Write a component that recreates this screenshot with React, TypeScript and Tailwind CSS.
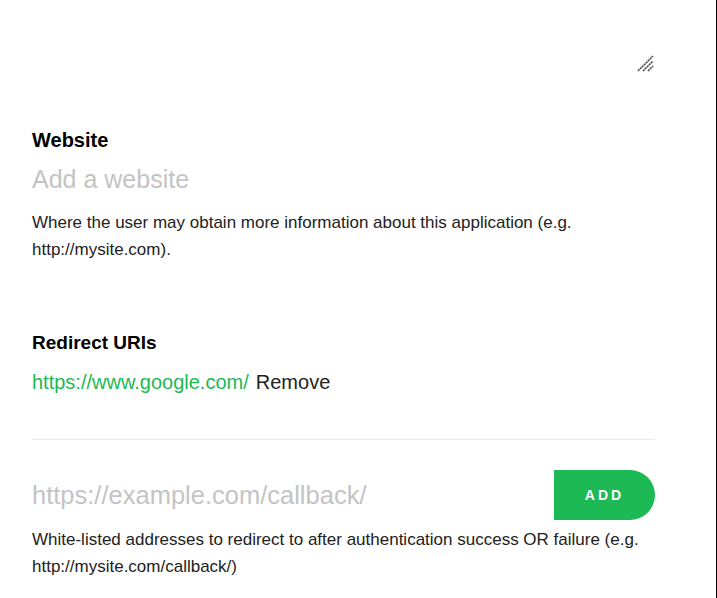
import * as React from 'react';

const font = { fontFamily: '"Liberation Sans", Arial, sans-serif' };

// textarea resize grip, drawn so it matches the larger one in the picture
const Grip = () => (
	<svg width="19" height="19" viewBox="0 0 19 19" className="absolute right-0 bottom-0 pointer-events-none">
		<g stroke="#555" strokeWidth="1.7" strokeDasharray="2.2 0.6">
			<line x1="2" y1="17" x2="17" y2="2" />
			<line x1="7" y1="17" x2="17" y2="7" />
			<line x1="12" y1="17" x2="17" y2="12" />
		</g>
	</svg>
);

export default function App() {
	const [uris, setUris] = React.useState<string[]>(['https://www.google.com/']);
	const [draft, setDraft] = React.useState('');

	return (
		<div className="w-[717px] h-[598px] overflow-hidden bg-white border-r border-black" style={font}>
			<div className="w-[623px] ml-8">
				<div className="relative w-full h-[73px]">
					<textarea className="block w-full h-full resize-none outline-none border-none bg-white text-[16px]" />
					<Grip />
				</div>

				<section className="mt-[55px]">
					<h3 className="text-[20px] font-bold leading-[24px] text-black">Website</h3>
					<input
						placeholder="Add a website"
						className="block w-full h-[38px] mt-[8px] text-[25px] outline-none placeholder:text-[#c4c4c4]"
					/>
					<p className="mt-[11px] text-[17px] leading-[27px] text-[#222]">
						Where the user may obtain more information about this application (e.g.
						<br />
						http://mysite.com).
					</p>
				</section>

				<section className="mt-[68px]">
					<h3 className="text-[19px] font-bold leading-[24px] text-black">Redirect URIs</h3>
					<ul className="mt-[15px]">
						{uris.map((u, i) => (
							<li key={i} className="flex items-center gap-[7px] text-[20px] leading-[24px]">
								<span className="text-[#1db954]">{u}</span>
								<button
									className="text-[#222] cursor-pointer"
									onClick={() => setUris(uris.filter((_, j) => j !== i))}>
									Remove
								</button>
							</li>
						))}
					</ul>
					<div className="mt-[45px] h-px bg-[#ebebeb]" />
					<div className="flex items-center mt-[30px]">
						<input
							value={draft}
							onChange={(e) => setDraft(e.target.value)}
							placeholder="https://example.com/callback/"
							className="flex-1 h-[50px] text-[25.5px] outline-none placeholder:text-[#c4c4c4]"
						/>
						<button
							onClick={() => {
								if (draft) setUris([...uris, draft]);
								setDraft('');
							}}
							className="w-[101px] h-[50px] bg-[#1db954] text-white text-[14px] font-bold tracking-[3px] rounded-r-[25px] cursor-pointer">
							ADD
						</button>
					</div>
					<p className="mt-[6px] text-[17px] leading-[27px] text-[#222]">
						White-listed addresses to redirect to after authentication success OR failure (e.g.
						<br />
						http://mysite.com/callback/)
					</p>
				</section>
			</div>
		</div>
	);
}
